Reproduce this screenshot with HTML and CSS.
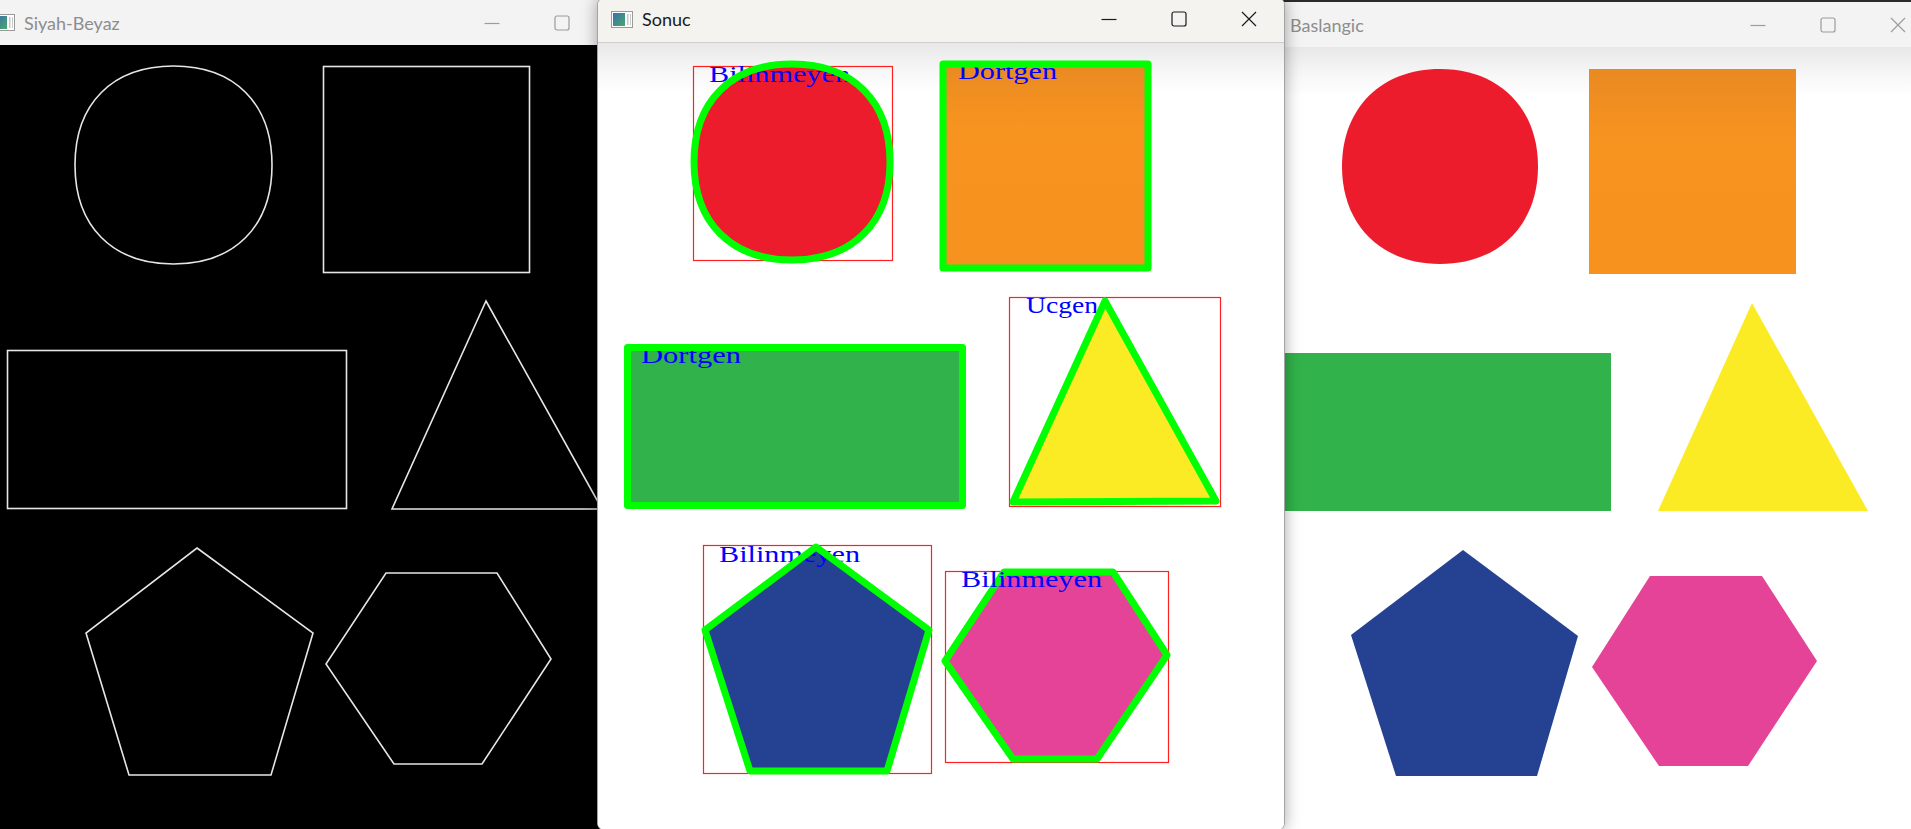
FILE: index.html
```html
<!DOCTYPE html>
<html>
<head>
<meta charset="utf-8">
<title>Shapes</title>
<link rel="stylesheet" href="styles.css">
</head>
<body>
<div class="desktop">

  <div class="win win-bw">
    <div class="titlebar">
      <svg class="app-icon" width="22" height="17" viewBox="0 0 22 17"><defs><linearGradient id="ig1" x1="0" y1="0" x2="1" y2="1"><stop offset="0" stop-color="#3a6fb0"/><stop offset="1" stop-color="#48a86a"/></linearGradient></defs><rect x="0.5" y="0.5" width="21" height="16" fill="#fff" stroke="#9a9a9a"/><rect x="2" y="2" width="12" height="13" fill="url(#ig1)"/><rect x="16" y="3" width="1.5" height="11" fill="#c8c8c8"/><rect x="19" y="3" width="1" height="11" fill="#c8c8c8"/></svg>
      <span class="title inactive">Siyah-Beyaz</span>
      <div class="controls inactive">
        <div class="btn"><svg width="16" height="16" viewBox="0 0 16 16"><line x1="0.5" y1="8.5" x2="15.5" y2="8.5"/></svg></div>
        <div class="btn"><svg width="16" height="16" viewBox="0 0 16 16"><rect x="1" y="1" width="14" height="14" rx="2"/></svg></div>
        <div class="btn"><svg width="16" height="16" viewBox="0 0 16 16"><path d="M1 1 L15 15 M15 1 L1 15"/></svg></div>
      </div>
    </div>
    <div class="content dark">
      <svg width="688" height="784" viewBox="-21 45 688 784" class="edges">
        <path d="M173.5,66 C234.6,66 272,103.6 272,165 C272,226.4 234.6,264 173.5,264 C112.4,264 75,226.4 75,165 C75,103.6 112.4,66 173.5,66 Z"/>
        <rect x="323.5" y="66.5" width="206" height="206"/>
        <rect x="7.5" y="350.5" width="339" height="158"/>
        <polygon points="486,301 602,509 392,509"/>
        <polygon points="197,548 313,633 271,775 129,775 86,633"/>
        <polygon points="386,573 497,573 551,659 482,764 394,764 326,664"/>
      </svg>
    </div>
  </div>

  <div class="win win-start">
    <div class="titlebar">
      <svg class="app-icon" width="22" height="17" viewBox="0 0 22 17"><defs><linearGradient id="ig3" x1="0" y1="0" x2="1" y2="1"><stop offset="0" stop-color="#3a6fb0"/><stop offset="1" stop-color="#48a86a"/></linearGradient></defs><rect x="0.5" y="0.5" width="21" height="16" fill="#fff" stroke="#9a9a9a"/><rect x="2" y="2" width="12" height="13" fill="url(#ig3)"/><rect x="16" y="3" width="1.5" height="11" fill="#c8c8c8"/><rect x="19" y="3" width="1" height="11" fill="#c8c8c8"/></svg>
      <span class="title inactive">Baslangic</span>
      <div class="controls inactive">
        <div class="btn"><svg width="16" height="16" viewBox="0 0 16 16"><line x1="0.5" y1="8.5" x2="15.5" y2="8.5"/></svg></div>
        <div class="btn"><svg width="16" height="16" viewBox="0 0 16 16"><rect x="1" y="1" width="14" height="14" rx="2"/></svg></div>
        <div class="btn"><svg width="16" height="16" viewBox="0 0 16 16"><path d="M1 1 L15 15 M15 1 L1 15"/></svg></div>
      </div>
    </div>
    <div class="content light">
      <svg width="688" height="782" viewBox="1245 47 688 782">
        <defs>
          <linearGradient id="org2" x1="0" y1="0" x2="0" y2="1"><stop offset="0" stop-color="#e98a22"/><stop offset="0.35" stop-color="#f7931f"/><stop offset="1" stop-color="#f7921e"/></linearGradient>
        </defs>
        <path fill="#ec1c2d" d="M1440,69 C1498.8,69 1538,108 1538,166.5 C1538,225 1498.8,264 1440,264 C1381.2,264 1342,225 1342,166.5 C1342,108 1381.2,69 1440,69 Z"/>
        <rect x="1589" y="69" width="207" height="205" fill="url(#org2)"/>
        <rect x="1270" y="353" width="341" height="158" fill="#31b24b"/>
        <polygon fill="#fbeb24" points="1752,303 1868,511 1658,511"/>
        <polygon fill="#244291" points="1463,550 1578,636 1537,776 1396,776 1351,635"/>
        <polygon fill="#e54397" points="1650,576 1762,576 1817,661 1748,766 1659,766 1592,667"/>
      </svg>
    </div>
  </div>

  <div class="win win-result">
    <div class="titlebar active-bar">
      <svg class="app-icon" width="22" height="17" viewBox="0 0 22 17"><defs><linearGradient id="ig2" x1="0" y1="0" x2="1" y2="1"><stop offset="0" stop-color="#3a6fb0"/><stop offset="1" stop-color="#48a86a"/></linearGradient></defs><rect x="0.5" y="0.5" width="21" height="16" fill="#fff" stroke="#9a9a9a"/><rect x="2" y="2" width="12" height="13" fill="url(#ig2)"/><rect x="16" y="3" width="1.5" height="11" fill="#c8c8c8"/><rect x="19" y="3" width="1" height="11" fill="#c8c8c8"/></svg>
      <span class="title">Sonuc</span>
      <div class="controls">
        <div class="btn"><svg width="16" height="16" viewBox="0 0 16 16"><line x1="0.5" y1="8.5" x2="15.5" y2="8.5"/></svg></div>
        <div class="btn"><svg width="16" height="16" viewBox="0 0 16 16"><rect x="1" y="1" width="14" height="14" rx="2"/></svg></div>
        <div class="btn"><svg width="16" height="16" viewBox="0 0 16 16"><path d="M1 1 L15 15 M15 1 L1 15"/></svg></div>
      </div>
    </div>
    <div class="content light">
      <svg width="686" height="787" viewBox="598 43 686 787">
        <defs>
          <linearGradient id="org1" x1="0" y1="0" x2="0" y2="1"><stop offset="0" stop-color="#e98a22"/><stop offset="0.3" stop-color="#f7931f"/><stop offset="1" stop-color="#f7921e"/></linearGradient>
        </defs>
        <!-- filled source shapes -->
        <path fill="#ec1c2d" d="M792,64 C852.8,64 890,101.2 890,162 C890,222.8 852.8,260 792,260 C731.2,260 694,222.8 694,162 C694,101.2 731.2,64 792,64 Z"/>
        <rect x="943" y="64" width="205" height="204" fill="url(#org1)"/>
        <rect x="627.5" y="347.5" width="335" height="158" fill="#31b24b"/>
        <polygon fill="#fbeb24" points="1105,301 1216,501 1013,502"/>
        <polygon fill="#244291" points="816,547 929,630 887,771 750,771 705,630"/>
        <polygon fill="#e54397" points="1004,572 1113,572 1167,655 1097,759 1013,759 945,661"/>

        <!-- pentagon -->
        <rect class="bbox" x="703.5" y="545.5" width="228" height="228"/>
        <text class="lbl" x="719" y="562" textLength="141" lengthAdjust="spacingAndGlyphs">Bilinmeyen</text>
        <polygon class="cnt" points="816,547 929,630 887,771 750,771 705,630"/>

        <!-- hexagon -->
        <rect class="bbox" x="945.5" y="571.5" width="223" height="191"/>
        <polygon class="cnt" points="1004,572 1113,572 1167,655 1097,759 1013,759 945,661"/>
        <text class="lbl" x="961" y="587" textLength="141" lengthAdjust="spacingAndGlyphs">Bilinmeyen</text>

        <!-- triangle -->
        <rect class="bbox" x="1009.5" y="297.5" width="211" height="209"/>
        <text class="lbl" x="1026" y="313" textLength="72" lengthAdjust="spacingAndGlyphs">Ucgen</text>
        <polygon class="cnt" points="1105,301 1216,501 1013,502"/>

        <!-- rectangle -->
        <rect class="bbox" x="627.5" y="347.5" width="335" height="158"/>
        <text class="lbl" x="641" y="363" textLength="100" lengthAdjust="spacingAndGlyphs">Dortgen</text>
        <rect class="cnt" x="627.5" y="347.5" width="335" height="158"/>

        <!-- square -->
        <rect class="bbox" x="943.5" y="64.5" width="205" height="204"/>
        <text class="lbl" x="958" y="79" textLength="99" lengthAdjust="spacingAndGlyphs">Dortgen</text>
        <rect class="cnt" x="943" y="64" width="205" height="204"/>

        <!-- circle -->
        <rect class="bbox" x="693.5" y="66.5" width="199" height="194"/>
        <text class="lbl" x="709" y="82" textLength="141" lengthAdjust="spacingAndGlyphs">Bilinmeyen</text>
        <path class="cnt" d="M792,64 C852.8,64 890,101.2 890,162 C890,222.8 852.8,260 792,260 C731.2,260 694,222.8 694,162 C694,101.2 731.2,64 792,64 Z"/>
      </svg>
    </div>
  </div>

</div>
</body>
</html>
```

FILE: styles.css
```css
html, body {
  margin: 0;
  padding: 0;
}

body {
  width: 1911px;
  height: 829px;
  overflow: hidden;
  background: #2b2b2b;
  font-family: Lato, "Noto Sans", sans-serif;
}

.desktop {
  position: relative;
  width: 1911px;
  height: 829px;
  overflow: hidden;
}

.win {
  position: absolute;
  width: 688px;
  display: flex;
  flex-direction: column;
  overflow: hidden;
  box-sizing: border-box;
}

.win-bw {
  left: -21px;
  top: 0;
  height: 829px;
  background: #000;
  z-index: 1;
}

.win-start {
  left: 1245px;
  top: 2px;
  height: 827px;
  background: #fff;
  z-index: 2;
}

.win-result {
  left: 597px;
  top: -3px;
  height: 834px;
  z-index: 3;
  background: #fff;
  border: 1px solid #a3a3a3;
  border-radius: 8px;
  box-shadow: 0 0 16px rgba(0, 0, 0, 0.35);
}

.titlebar {
  flex: none;
  height: 45px;
  display: flex;
  align-items: center;
  background: #f3f3f3;
  padding-left: 14px;
  box-sizing: border-box;
}

.active-bar {
  height: 45px;
  padding-left: 13px;
  padding-bottom: 2px;
  background: #f4f3ef;
  border-bottom: 1px solid #cdcdcd;
}

.app-icon {
  flex: none;
  display: block;
}

.title {
  margin-left: 9px;
  font-size: 18px;
  color: #1a1a1a;
  line-height: 1;
  white-space: nowrap;
}

.title.inactive {
  color: #8d8d8d;
}

.controls {
  margin-left: auto;
  display: flex;
  height: 100%;
}

.btn {
  width: 70px;
  display: flex;
  align-items: center;
  justify-content: center;
}

.btn svg {
  display: block;
  fill: none;
  stroke: #1a1a1a;
  stroke-width: 1.2;
}

.controls.inactive .btn svg {
  stroke: #9c9c9c;
}

.content {
  flex: 1;
  overflow: hidden;
}

.content svg {
  display: block;
}

.content.dark {
  background: #000;
}

.content.light {
  background: linear-gradient(#e8e8e8, #f7f7f7 28px, #ffffff 50px);
}

.edges path,
.edges rect,
.edges polygon {
  fill: none;
  stroke: #e6e6e6;
  stroke-width: 1.6;
}

.bbox {
  fill: none;
  stroke: #ff2020;
  stroke-width: 1.2;
}

.cnt {
  fill: none;
  stroke: #00ff00;
  stroke-width: 7;
  stroke-linejoin: round;
}

.lbl {
  font-family: "Liberation Serif", "DejaVu Serif", serif;
  font-size: 23px;
  fill: #0000ff;
}
```
